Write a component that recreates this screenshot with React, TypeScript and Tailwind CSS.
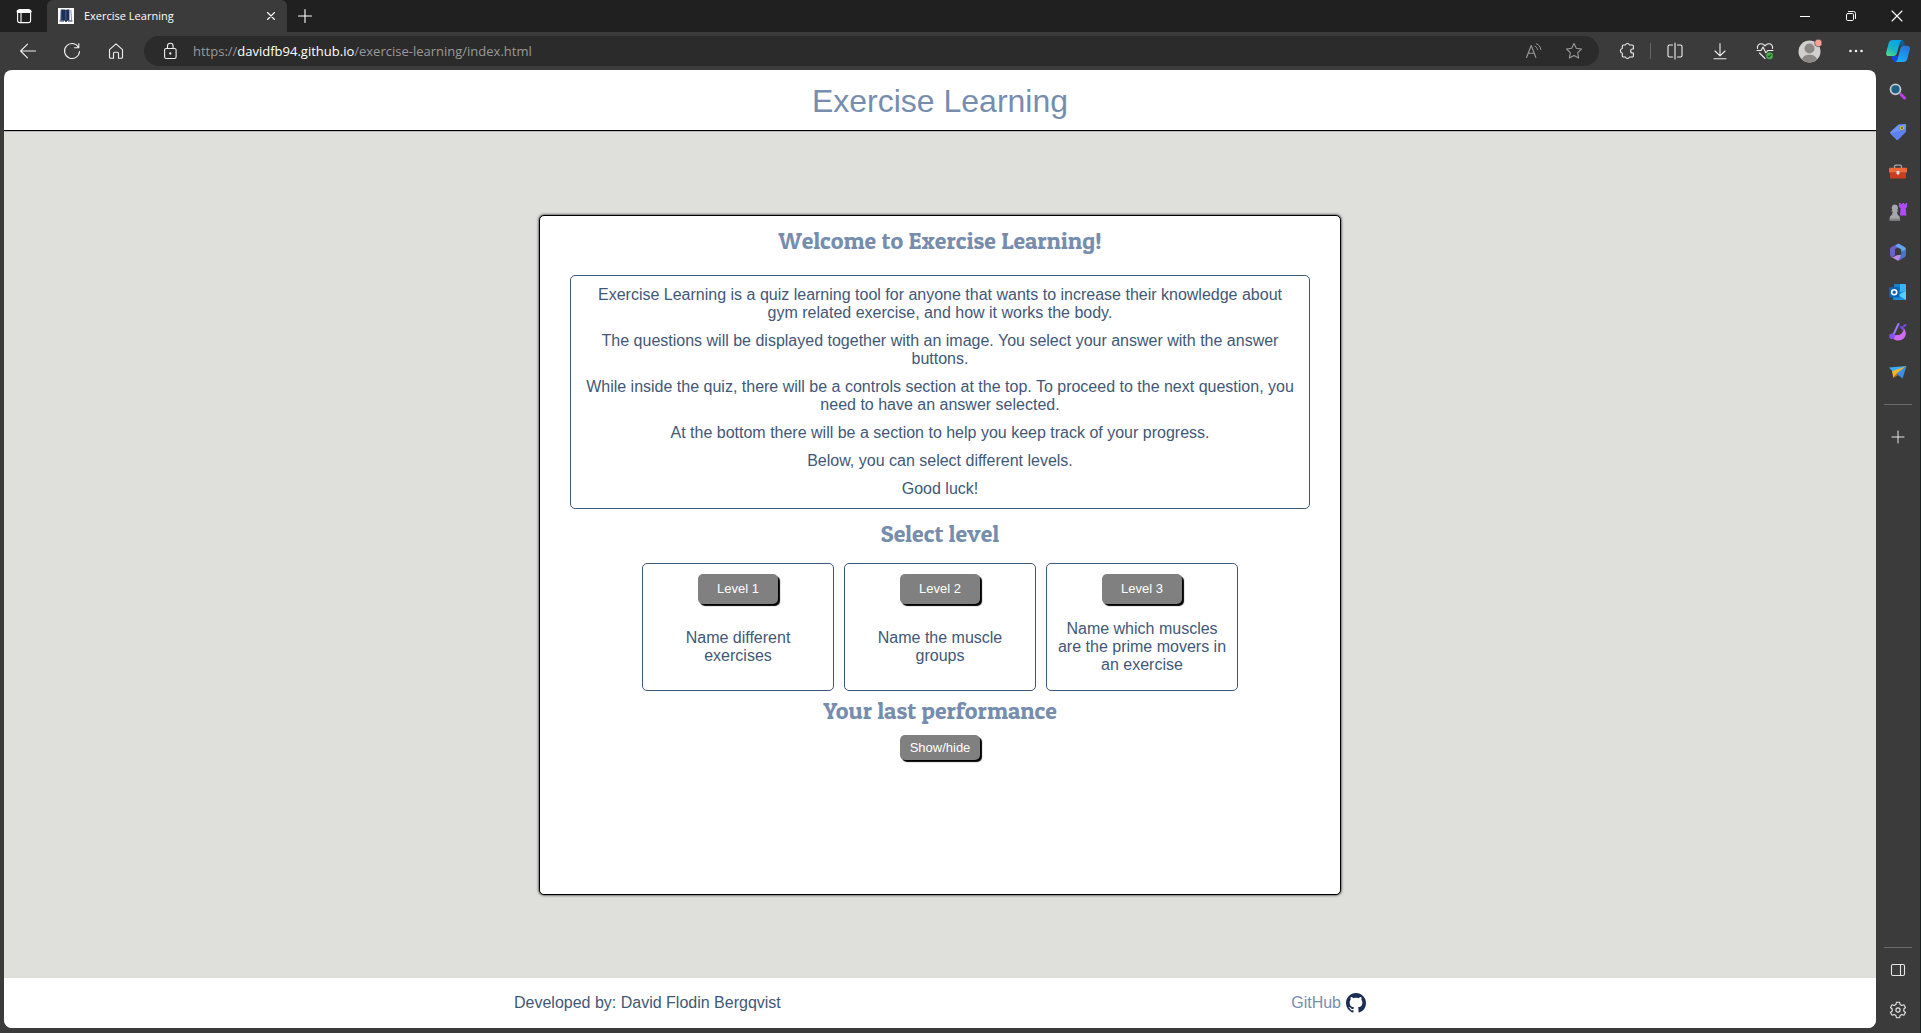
import React from "react";

type IconProps = { children: React.ReactNode; size?: "sm" | "md" | "lg" };

function Icon({ children, size = "md" }: IconProps) {
  const cls = size === "sm" ? "size-3" : size === "lg" ? "size-6" : "size-[18px]";
  const box = size === "sm" ? "0 0 12 12" : size === "lg" ? "0 0 24 24" : "0 0 18 18";
  return (
    <svg
      aria-hidden="true"
      className={cls}
      viewBox={box}
      fill="none"
      stroke="currentColor"
      strokeWidth="1.1"
      strokeLinecap="round"
      strokeLinejoin="round"
    >
      {children}
    </svg>
  );
}

function BarButton({ label, className, children }: { label: string; className: string; children: React.ReactNode }) {
  return (
    <button type="button" aria-label={label} className={`flex shrink-0 items-center justify-center ${className}`}>
      {children}
    </button>
  );
}

function TitleBar() {
  return (
    <header className="flex h-8 bg-[#202020] text-white">
      <BarButton label="Tab actions" className="w-[47px]">
        <Icon>
          <rect x="2.6" y="2.6" width="13" height="13" rx="2.2" />
          <path d="M3 4.5h12.2" strokeWidth="2.8" />
          <path d="M6 6v9" />
        </Icon>
      </BarButton>
      <div className="flex w-60 items-center rounded-t-md bg-[#3b3b3b] pr-2 pl-[11px]">
        <svg aria-hidden="true" className="size-4" viewBox="0 0 16 16">
          <rect width="16" height="16" fill="#fff" />
          <path d="M3 1.500h3.800l1 .6 1-.6h2.600v11H9.500L8.500 14H7.500l-1-1.500H2.500z" fill="#1c2f57" />
          <path d="M7.800 2.500v9.500M3 2v9.500M12.800 2l.8 10.500" stroke="#5b71a3" fill="none" strokeWidth=".8" />
          <path d="M1.500 13h4.500M10 13h4.500" stroke="#1c2f57" />
        </svg>
        <span className="ml-2.5 flex-1 font-['Open_Sans','Noto_Sans',sans-serif] text-[11px]">Exercise Learning</span>
        <BarButton label="Close tab" className="size-4">
          <Icon size="sm">
            <path d="M2.500 2.500l7 7M9.500 2.500l-7 7" />
          </Icon>
        </BarButton>
      </div>
      <BarButton label="New tab" className="w-[35px]">
        <Icon>
          <path d="M9 2.500v13M2.500 9h13" />
        </Icon>
      </BarButton>
      <div className="flex-1" />
      <BarButton label="Minimize" className="w-[46px]">
        <Icon size="sm">
          <path d="M1 6.500h10" strokeWidth="1" strokeLinecap="butt" />
        </Icon>
      </BarButton>
      <BarButton label="Restore" className="w-[46px]">
        <Icon size="sm">
          <rect x="1.500" y="3.500" width="7" height="7" rx="1.200" strokeWidth="1" />
          <path d="M3.500 1.500H8.500a2 2 0 0 1 2 2V8.500" strokeWidth="1" />
        </Icon>
      </BarButton>
      <BarButton label="Close" className="mr-px w-[46px]">
        <Icon size="sm">
          <path d="M1 1l10 10M11 1L1 11" />
        </Icon>
      </BarButton>
    </header>
  );
}

function Toolbar() {
  return (
    <nav aria-label="Toolbar" className="flex h-[38px] items-center bg-[#3b3b3b] pl-1.5 text-[#f0f0f0]">
      <BarButton label="Back" className="w-11">
        <Icon>
          <path d="M16.500 9H2M8.500 2.200L1.600 9l6.900 6.800" />
        </Icon>
      </BarButton>
      <BarButton label="Refresh" className="w-11">
        <Icon>
          <path d="M16.500 9.500A7.500 7.500 0 1 1 15.500 5.200M15.800 1.500v4.300h-4.300" />
        </Icon>
      </BarButton>
      <BarButton label="Home" className="w-11">
        <Icon>
          <path d="M2.500 7.600L9 1.800l6.500 5.800v7.600a1 1 0 0 1-1 1h-3v-5a1 1 0 0 0-1-1h-3a1 1 0 0 0-1 1v5h-3a1 1 0 0 1-1-1z" />
        </Icon>
      </BarButton>
      <div className="ml-1.5 flex h-[30px] min-w-0 flex-1 items-center rounded-full bg-[#2b2b2b] pr-[5px]">
        <BarButton label="Site information" className="w-[49px] pl-0.5">
          <Icon>
            <rect x="3.600" y="6.500" width="11.500" height="10" rx="1.600" />
            <path d="M6.500 6.500V4a2.800 2.800 0 0 1 5.600 0v2.500" />
            <circle cx="9.300" cy="11.500" r=".6" fill="currentColor" />
          </Icon>
        </BarButton>
        <div className="min-w-0 flex-1 truncate pt-px font-['Open_Sans','Noto_Sans',sans-serif] text-[13px] text-[#9a9a9a]">
          https://<span className="text-white">davidfb94.github.io</span>/exercise-learning/index.html
        </div>
        <BarButton label="Read aloud" className="w-10 text-[#9a9a9a]">
          <Icon>
            <path d="M1.500 15.500L6.200 3.500l4.700 12M3.200 11.300h6" />
            <path d="M10 4.200c1.500.6 2.300 1.700 2.500 3.300M11.500 1.800c2.600 1 4 2.900 4.300 5.700" strokeWidth="1" />
          </Icon>
        </BarButton>
        <BarButton label="Add to favorites" className="w-10 text-[#9a9a9a]">
          <Icon>
            <path d="M9 1.500l2.300 4.800 5.200.7-3.800 3.700.9 5.300L9 13.500 4.400 16l.9-5.300L1.500 7l5.200-.7z" />
          </Icon>
        </BarButton>
      </div>
      <BarButton label="Extensions" className="ml-1.5 w-11">
        <Icon>
          <path d="M4.300 6.500V4.200A1.200 1.200 0 0 1 5.500 3h2a2 2 0 0 1 3.900 0h2.800a1.200 1.200 0 0 1 1.200 1.200V7h-.8a2 2 0 0 0 0 4h.8v2.800a1.200 1.200 0 0 1-1.200 1.200h-2.800a2 2 0 0 1-3.900 0h-2a1.200 1.200 0 0 1-1.200-1.200V11.200a2.400 2.400 0 0 1 0-4.700z" />
        </Icon>
      </BarButton>
      <div className="mx-px h-4 w-px bg-[#666]" />
      <BarButton label="Split screen" className="w-[45px]">
        <Icon>
          <path d="M9 1v16M6.500 3H3.500A1.500 1.500 0 0 0 2 4.500v9A1.500 1.500 0 0 0 3.500 15h3M11.500 3h3A1.500 1.500 0 0 1 16 4.500v9a1.500 1.500 0 0 1-1.500 1.500h-3" />
        </Icon>
      </BarButton>
      <BarButton label="Downloads" className="w-[45px]">
        <Icon>
          <path d="M9 1.500v12M4 9l5 4.800L14 9M3 16.800h12" />
        </Icon>
      </BarButton>
      <BarButton label="Browser essentials" className="w-[45px]">
        <Icon>
          <path d="M1.500 6.500C.8 3.500 3 1.800 5 1.800c2 0 3.200 1 4 2 .8-1 2-2 4-2s4.200 1.700 3.500 4.700M1 8.500h4l2-3.500 3 6 1.700-2.500H17M3.500 11L9 16.500" />
          <circle cx="13.500" cy="13.800" r="3.800" fill="#4caf50" stroke="#3b3b3b" strokeWidth=".6" />
          <path d="M12 14l1 1 2-2.300" stroke="#1d5d20" />
        </Icon>
      </BarButton>
      <BarButton label="Profile" className="w-[45px]">
        <Icon size="lg">
          <circle cx="11.500" cy="12.500" r="11" fill="#d2d0ce" stroke="none" />
          <circle cx="11.500" cy="9.500" r="5" fill="#8b8886" stroke="none" />
          <path d="M4 20.500c1-3.500 4-4.800 7.500-4.800s6.500 1.300 7.500 4.800a11 11 0 0 1-15 0z" fill="#8b8886" stroke="none" />
          <circle cx="20.300" cy="4" r="3.700" fill="#ffa29a" stroke="#3b3b3b" strokeWidth=".6" />
        </Icon>
      </BarButton>
      <BarButton label="Settings and more" className="w-[45px]">
        <Icon>
          <g fill="currentColor" stroke="none">
            <circle cx="4.500" cy="9" r="1.300" />
            <circle cx="10" cy="9" r="1.300" />
            <circle cx="15.500" cy="9" r="1.300" />
          </g>
        </Icon>
      </BarButton>
      <BarButton label="Copilot" className="mr-0.5 w-[42px]">
        <Icon size="lg">
          <defs>
            <linearGradient id="cpA" x1="0" y1="1" x2=".6" y2="0">
              <stop offset="0" stopColor="#5fe07a" />
              <stop offset=".5" stopColor="#16b5c8" />
              <stop offset="1" stopColor="#0aa3e8" />
            </linearGradient>
            <linearGradient id="cpB" x1="0" y1="1" x2=".5" y2="0">
              <stop offset="0" stopColor="#12b7ff" />
              <stop offset="1" stopColor="#2878dc" />
            </linearGradient>
          </defs>
          <g stroke="none">
            <path d="M12 1h3.500c2 0 2.500 1.500 3 3.500L19 6.500h-6z" fill="#0a5f96" />
            <path d="M5 17h7l-1 6H9.500C7.500 23 6.500 21.500 6 19.500z" fill="#1548d8" />
            <path d="M6.500 1H16c-1.700.8-2.300 3-3 5.500l-2 7.500c-.6 2-1.500 3-3.500 3H3C.5 17-.3 15.500.3 13l2.400-9C3.300 2 4.500 1 6.500 1z" fill="url(#cpA)" />
            <path d="M17.500 23H9.500c1.500-.8 2-2.500 2.500-4.500l2.300-8.500c.6-2.300 1.500-3.300 3.500-3.300H21c2.500 0 3.300 1.500 2.700 4L21.300 20c-.6 2-1.800 3-3.800 3z" fill="url(#cpB)" />
          </g>
        </Icon>
      </BarButton>
    </nav>
  );
}

const sideApps: { label: string; art: React.ReactNode }[] = [
  {
    label: "Search",
    art: (
      <>
        <path d="M12 11.500l3.500 3.500" stroke="#c53cf0" strokeWidth="3" />
        <circle cx="6.500" cy="6.300" r="5" fill="#1e5f85" stroke="#c4c8cb" strokeWidth="1.800" />
      </>
    ),
  },
  {
    label: "Shopping",
    art: (
      <>
        <path d="M9.500 1.500l6.500-.5c.8 0 1.200.4 1.200 1.200l-.4 6c0 .5-.3.900-.6 1.200l-7 7c-.5.500-1.200.5-1.700 0l-6-6c-.5-.5-.5-1.200 0-1.700z" fill="#6c93fa" stroke="none" />
        <path d="M1.500 10.400l6 6c.5.500 1.200.5 1.700 0l7-7c.3-.3.600-.7.600-1.200V6z" fill="#5f80f0" stroke="none" />
        <circle cx="13" cy="5" r="1.500" fill="#4b4a35" stroke="#e8be22" strokeWidth="1.200" />
      </>
    ),
  },
  {
    label: "Tools",
    art: (
      <>
        <path d="M5.500 5V3.500A1.300 1.300 0 0 1 6.800 2.200h4.400a1.300 1.300 0 0 1 1.300 1.300V5" stroke="#a8a8a8" strokeWidth="1.300" />
        <rect x="0" y="4.800" width="18" height="5" rx="1" fill="#f0683a" stroke="none" />
        <path d="M1 9.500h16V14.500a1 1 0 0 1-1 1H2a1 1 0 0 1-1-1z" fill="#c93f1d" stroke="none" />
        <path d="M7.500 8h3v2.800L9 12l-1.500-1.200z" fill="#d8dcdf" stroke="none" />
      </>
    ),
  },
  {
    label: "Games",
    art: (
      <>
        <path d="M10 0h1.800v1.300h1.400V0h1.800v1.300h1.400V0H18v4l-1.300 1.300.8 7.200h-6.500l.6-7.200L10 4z" fill="#b04cf5" stroke="none" />
        <path d="M5.800 1.500a3.300 3.300 0 0 1 2.200 5.700h1.200v1.400H8c.2 2.500.7 3.700 2.800 5.200v3.700H.8v-3.700c2-1.500 2.700-2.700 2.900-5.200H2.500V7.200h1.200a3.300 3.300 0 0 1 2.100-5.700z" fill="#a5a6a8" stroke="none" />
        <path d="M.5 15.500h10.600v2H.5z" fill="#83858a" stroke="none" />
      </>
    ),
  },
  {
    label: "Microsoft 365",
    art: (
      <g stroke="none">
        <path d="M9 .4L2.500 4A3 3 0 0 0 1 6.600v5c0 1.200.7 2.200 1.600 2.700L6 12.200V6l5.500-3.300z" fill="#6a62c8" />
        <path d="M9.500.4l6 3.600A3 3 0 0 1 17 6.600v3.700l-4.800-1.500V6.500L6.500 3z" fill="#62a6ef" />
        <path d="M12.200 8.800L17 6.300v5.400a3 3 0 0 1-1.500 2.600l-5 2.900c-.4.2-.8.300-1.300.3L8 14l4.200-2.500z" fill="#4a72cf" />
        <path d="M1.600 13.500c1.500.8 2.900.6 4.400-.3L9 11.800l3.200.3-2.700 5.300c-.8 0-1.300-.1-2-.5z" fill="#b98ae0" />
        <path d="M6.200 7l2.900-1.700L12 7v3.500l-2.900 1.700-2.900-1.700z" fill="#3b3b3b" />
      </g>
    ),
  },
  {
    label: "Outlook",
    art: (
      <g stroke="none">
        <rect x="5" y="1" width="12" height="10" rx="1" fill="#35b8f1" />
        <path d="M5 1h6v7H5z" fill="#1683cf" />
        <path d="M4 10l13-2v8a1 1 0 0 1-1 1H5a1 1 0 0 1-1-1z" fill="#1c8fda" />
        <path d="M17 8v9L9 12z" fill="#55d0fb" />
        <rect x="0" y="4" width="10.500" height="10.500" rx="1" fill="#0f62b2" />
        <circle cx="5.200" cy="9.200" r="2.500" fill="none" stroke="#fff" strokeWidth="1.600" />
      </g>
    ),
  },
  {
    label: "Drop",
    art: (
      <>
        <path d="M3 12.500c.3 3 3 5 6.200 5 4.400 0 7.600-3 7.600-7.200 0-2.400-1-4.300-2.700-5.600.6 4.300-1.700 7.000-5.500 7.400z" fill="#d26bf2" stroke="none" />
        <path d="M9.500 1L4 12.500" stroke="#9a78fa" strokeWidth="2" />
        <circle cx="3" cy="13.300" r="2.800" fill="#8450f0" stroke="none" />
        <path d="M12 4l2.500 2.500M14.500 3.500l2-1.500" stroke="#7a4af0" strokeWidth="2" />
      </>
    ),
  },
  {
    label: "Send",
    art: (
      <g stroke="none">
        <path d="M0 4.500L17.500 3 4 9z" fill="#39aef3" />
        <path d="M17.500 3L3 8.300l1.300 6.500z" fill="#f3b62a" />
        <path d="M17.500 3L7.500 10.500l6 5z" fill="#3a8fe8" />
        <path d="M7.500 10.500l-3.200 4.300 5-2.600z" fill="#ba6d10" />
      </g>
    ),
  },
];

function SideBar() {
  return (
    <aside className="flex w-[45px] shrink-0 flex-col items-center border-r border-[#16211f] pt-0.5 text-[#e6e6e6]">
      {sideApps.map((app) => (
        <BarButton key={app.label} label={app.label} className="h-10 w-10">
          <Icon>{app.art}</Icon>
        </BarButton>
      ))}
      <div className="mt-3 h-px w-7 bg-[#6b6b6b]" />
      <BarButton label="Customize" className="mt-3 h-10 w-10">
        <Icon>
          <path d="M9 3v12M3 9h12" strokeWidth="1" />
        </Icon>
      </BarButton>
      <div className="mt-auto h-px w-7 bg-[#6b6b6b]" />
      <BarButton label="Show sidebar" className="mt-0.5 h-10 w-10">
        <Icon>
          <rect x="2.500" y="3.500" width="13" height="11" rx="1.500" />
          <path d="M11.500 3.500v11" />
        </Icon>
      </BarButton>
      <BarButton label="Settings" className="mb-[3px] h-10 w-10">
        <Icon>
          <circle cx="9" cy="9" r="2.100" />
          <path d="M7.400 1.300h3.200l.5 2.300 1.600.9 2.200-.8 1.600 2.800-1.700 1.500v2l1.700 1.500-1.600 2.800-2.200-.8-1.600.9-.5 2.300H7.400l-.5-2.300-1.600-.9-2.200.8-1.600-2.800L3.200 10V8L1.500 6.500l1.600-2.800 2.200.8 1.600-.9z" />
        </Icon>
      </BarButton>
    </aside>
  );
}

const intro = [
  "Exercise Learning is a quiz learning tool for anyone that wants to increase their knowledge about gym related exercise, and how it works the body.",
  "The questions will be displayed together with an image. You select your answer with the answer buttons.",
  "While inside the quiz, there will be a controls section at the top. To proceed to the next question, you need to have an answer selected.",
  "At the bottom there will be a section to help you keep track of your progress.",
  "Below, you can select different levels.",
  "Good luck!",
];

const levels = [
  { name: "Level 1", text: "Name different exercises" },
  { name: "Level 2", text: "Name the muscle groups" },
  { name: "Level 3", text: "Name which muscles are the prime movers in an exercise" },
];

function Heading({ className = "", children }: { className?: string; children: React.ReactNode }) {
  return (
    <h2
      className={`font-['Patua_One','Bree_Serif','Liberation_Serif',serif] text-2xl leading-[30px] font-normal text-[#768dae] ${className}`}
    >
      {children}
    </h2>
  );
}

function QuizButton({ className, children }: { className: string; children: React.ReactNode }) {
  return (
    <button
      type="button"
      className={`w-20 rounded-[5px] bg-[#808080] pt-px text-[13px] text-white shadow-[2px_2px_1px_#000] ${className}`}
    >
      {children}
    </button>
  );
}

function Page() {
  return (
    <div className="mb-[5px] ml-1 flex min-w-0 flex-1 flex-col overflow-hidden rounded-lg bg-[#dfe0db] font-['Liberation_Sans',Arial,sans-serif] text-base leading-[18px] text-[#3f5878]">
      <div className="border-b border-black bg-white pt-[13px] pb-[11px] text-center shadow-[0_0_1px_#000]">
        <h1 className="text-[32px] leading-9 text-[#768dae]">Exercise Learning</h1>
      </div>
      <main className="flex flex-1 items-center justify-center">
        <section className="flex min-h-[680px] w-full max-w-[802px] flex-col items-center rounded-[5px] border border-black bg-white px-[30px] pt-2.5 text-center shadow-[0_0_3px_#000]">
          <Heading>Welcome to Exercise Learning!</Heading>
          <div className="mt-[19px] flex flex-col gap-2.5 self-stretch rounded-[5px] border border-[#3f5878] p-2.5">
            {intro.map((line) => (
              <p key={line}>{line}</p>
            ))}
          </div>
          <Heading className="mt-2.5">Select level</Heading>
          <div className="mt-3.5 flex gap-2.5">
            {levels.map((level) => (
              <div key={level.name} className="flex w-48 flex-col items-center rounded-[5px] border border-[#3f5878] px-2.5 pt-2.5">
                <QuizButton className="h-[30px]">{level.name}</QuizButton>
                <p className="my-auto py-4">{level.text}</p>
              </div>
            ))}
          </div>
          <Heading className="mt-[5px]">Your last performance</Heading>
          <QuizButton className="mt-[9px] h-[25px]">Show/hide</QuizButton>
        </section>
      </main>
      <footer className="flex h-[50px] items-center justify-center bg-white">
        <div className="flex w-full max-w-[852px] items-center justify-between">
          <p>Developed by: David Flodin Bergqvist</p>
          <a href="https://github.com" className="flex items-center gap-[5px] text-[#768dae]">
            GitHub
            <svg aria-hidden="true" className="size-5" viewBox="0 0 16 16" fill="#1b2d52">
              <path d="M8 0C3.580 0 0 3.580 0 8c0 3.540 2.290 6.530 5.470 7.590.4.070.55-.17.550-.38 0-.19-.01-.82-.01-1.490-2.010.37-2.530-.49-2.690-.94-.09-.23-.48-.94-.82-1.130-.28-.15-.68-.52-.01-.53.630-.01 1.080.58 1.230.82.720 1.210 1.870.87 2.330.66.070-.52.280-.87.510-1.070-1.780-.2-3.640-.89-3.640-3.950 0-.87.310-1.590.82-2.150-.08-.2-.36-1.020.08-2.120 0 0 .67-.21 2.200.82.640-.18 1.320-.27 2-.27s1.360.09 2 .27c1.530-1.040 2.200-.82 2.200-.82.440 1.100.16 1.920.08 2.120.51.560.82 1.270.82 2.150 0 3.070-1.870 3.750-3.650 3.950.29.250.54.730.54 1.480 0 1.070-.01 1.930-.01 2.200 0 .21.15.46.550.38A8.010 8.010 0 0 0 16 8c0-4.420-3.580-8-8-8z" />
            </svg>
          </a>
        </div>
      </footer>
    </div>
  );
}

export default function App() {
  return (
    <div className="flex min-h-screen flex-col bg-[#3b3b3b]">
      <TitleBar />
      <Toolbar />
      <div className="flex flex-1">
        <Page />
        <SideBar />
      </div>
    </div>
  );
}
